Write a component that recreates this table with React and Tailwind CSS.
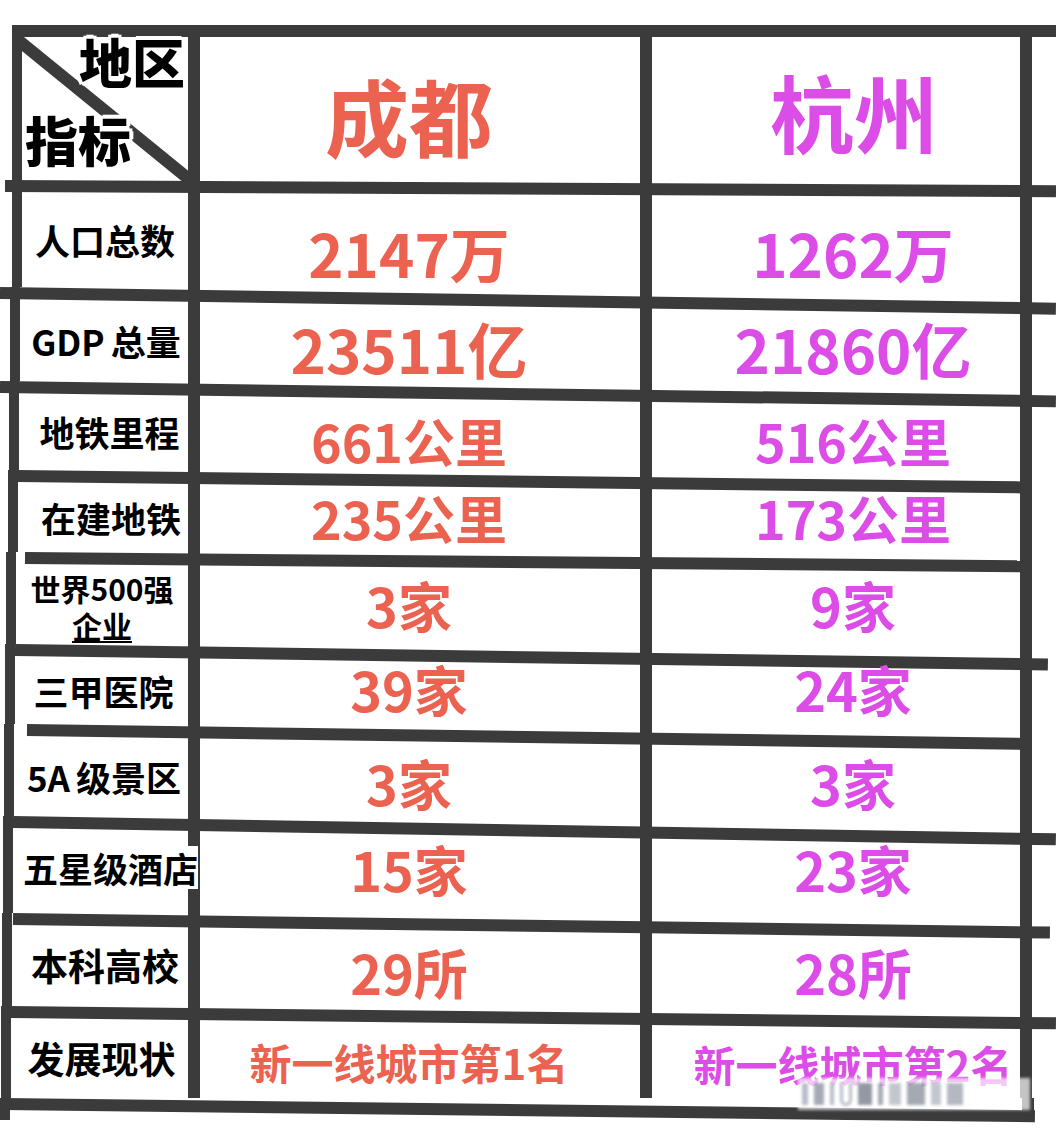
import React from "react";

const DARK = "bg-[#3b3b3b]";
const SHADOW =
  "[text-shadow:0_0_3px_#fff,4px_0_0_#fff,-4px_0_0_#fff,0_4px_0_#fff,0_-4px_0_#fff,3px_3px_0_#fff,-3px_-3px_0_#fff,3px_-3px_0_#fff,-3px_3px_0_#fff]";

function Bar({ cls }) {
  return <div className={`h-[12px] ${DARK} origin-left ${cls}`} />;
}

function Row({ h, ml, w1, label, a, b, size, tya, tyb }) {
  return (
    <div className={`flex -mt-[12px] ${h}`}>
      <div className={`${ml} w-[10px] shrink-0 ${DARK}`} />
      <div className={`${w1} shrink-0 pt-[12px] flex items-center justify-center`}>
        {label}
      </div>
      <div className={`w-[12px] shrink-0 ${DARK}`} />
      <div className="w-[440px] shrink-0 pt-[12px] pr-[22px] flex items-center justify-center">
        <span className={`${size} ${tya} font-bold leading-none whitespace-nowrap text-[#ec6250]`}>{a}</span>
      </div>
      <div className={`w-[12px] shrink-0 ${DARK}`} />
      <div className="w-[368px] shrink-0 pt-[12px] pl-[34px] flex items-center justify-center">
        <span className={`${size} ${tyb} font-bold leading-none whitespace-nowrap text-[#dc4ce6]`}>{b}</span>
      </div>
      <div className={`w-[12px] shrink-0 ${DARK}`} />
    </div>
  );
}

const L = "text-[35px] font-bold leading-none text-black whitespace-nowrap";
const L37 = "text-[37px] font-bold leading-none text-black whitespace-nowrap";

export default function App() {
  return (
    <div className="relative w-[1056px] h-[1134px] bg-white overflow-hidden font-['Noto_Sans_CJK_SC','Noto_Sans',sans-serif]">
      <div className="pt-[25px]">
        <Bar cls="ml-[12px] w-[1044px]" />
        {/* header row */}
        <div className="flex -mt-[12px] h-[155px]">
          <div className={`ml-[12px] w-[10px] shrink-0 ${DARK}`} />
          <div className="w-[166px] shrink-0 pt-[12px] relative">
            <svg className="absolute left-0 top-0 overflow-visible" width="166" height="155">
              <line x1="-4" y1="15" x2="168" y2="155" stroke="#3b3b3b" strokeWidth="12" />
            </svg>
            <div className="relative z-10 flex flex-col">
              <span className={`self-end mr-[3px] -mt-[2px] text-[53px] font-black leading-none text-black ${SHADOW}`}>地区</span>
              <span className={`self-start ml-[3px] mt-[25px] text-[53px] font-black leading-none text-black ${SHADOW}`}>指标</span>
            </div>
          </div>
          <div className={`w-[12px] shrink-0 ${DARK}`} />
          <div className="w-[440px] shrink-0 pt-[12px] pr-[22px] flex items-center justify-center">
            <span className="text-[84px] font-bold leading-none text-[#ec6250] translate-y-[6px]">成都</span>
          </div>
          <div className={`w-[12px] shrink-0 ${DARK}`} />
          <div className="w-[368px] shrink-0 pt-[12px] pl-[36px] flex items-center justify-center">
            <span className="text-[84px] font-bold leading-none text-[#dc4ce6] translate-y-[2px]">杭州</span>
          </div>
          <div className={`w-[12px] shrink-0 ${DARK}`} />
        </div>

        <Bar cls="ml-[5px] w-[1051px] rotate-[0.28deg]" />
        <Row h="h-[107px]" ml="ml-[12px]" w1="w-[166px]" size="text-[60px]" tya="translate-y-[12px]" tyb="translate-y-[12px]"
          label={<span className={L}>人口总数</span>} a="2147万" b="1262万" />

        <Bar cls="ml-[0px] w-[1056px] rotate-[0.85deg]" />
        <Row h="h-[94px]" ml="ml-[10px]" w1="w-[168px]" size="text-[60px]" tya="translate-y-[8px]" tyb="translate-y-[8px]"
          label={<span className={`${L} translate-x-[2px]`}><span>GDP</span><span className="ml-[6px]">总量</span></span>} a="23511亿" b="21860亿" />

        <Bar cls="ml-[0px] w-[1056px] rotate-[0.78deg]" />
        <Row h="h-[89px]" ml="ml-[9px]" w1="w-[169px]" size="text-[52px]" tya="translate-y-[9px]" tyb="translate-y-[9px]"
          label={<span className={`${L} translate-x-[6px]`}>地铁里程</span>} a="661公里" b="516公里" />

        <Bar cls="ml-[17px] w-[1005px] rotate-[0.65deg]" />
        <Row h="h-[82px]" ml="ml-[8px]" w1="w-[170px]" size="text-[52px]" tya="translate-y-[1px]" tyb="translate-y-[1px]"
          label={<span className={`${L} translate-x-[8px]`}>在建地铁</span>} a="235公里" b="173公里" />

        <Bar cls="ml-[25px] w-[1005px] rotate-[0.47deg]" />
        <Row h="h-[92px]" ml="ml-[6px]" w1="w-[172px]" size="text-[54px]" tya="translate-y-[1px]" tyb="translate-y-[1px]"
          label={
            <div className="flex flex-col items-center text-[30px] leading-[37px] font-bold text-black translate-y-[3px]">
              <span>世界500强</span>
              <span className="underline decoration-[2px] underline-offset-[3px]">企业</span>
            </div>
          }
          a="3家" b="9家" />

        <Bar cls="ml-[15px] w-[1033px] rotate-[0.8deg]" />
        <Row h="h-[80px]" ml="ml-[5px]" w1="w-[173px]" size="text-[54px]" tya="-translate-y-[1px]" tyb="-translate-y-[1px]"
          label={<span className={`${L} translate-x-[2px]`}>三甲医院</span>} a="39家" b="24家" />

        <Bar cls="ml-[27px] w-[1003px] rotate-[0.8deg]" />
        <Row h="h-[92px]" ml="ml-[4px]" w1="w-[174px]" size="text-[54px]" tya="translate-y-[7px]" tyb="translate-y-[7px]"
          label={<span className={`${L} translate-x-[3px]`}><span>5A</span><span className="ml-[6px]">级景区</span></span>} a="3家" b="3家" />

        <Bar cls="ml-[13px] w-[1043px] rotate-[0.95deg]" />
        <Row h="h-[97px]" ml="ml-[3px]" w1="w-[175px]" size="text-[54px]" tya="-translate-y-[2px]" tyb="-translate-y-[2px]"
          label={<span className={`${L} relative z-10 bg-white py-[4px] translate-x-[10px] -translate-y-[3px]`}>五星级酒店</span>}
          a="15家" b="23家" />

        <Bar cls="ml-[13px] w-[1037px] rotate-[0.75deg]" />
        <Row h="h-[93px]" ml="ml-[2px]" w1="w-[176px]" size="text-[54px]" tya="translate-y-[6px]" tyb="translate-y-[6px]"
          label={<span className={`${L37} translate-x-[5px]`}>本科高校</span>} a="29所" b="28所" />

        <Bar cls="ml-[10px] w-[1046px] rotate-[0.62deg]" />
        <Row h="h-[92px]" ml="ml-[1px]" w1="w-[177px]" size="text-[42px]" tya="translate-y-[4px]" tyb="translate-y-[6px]"
          label={<span className={`${L37} translate-x-[2px]`}>发展现状</span>} a="新一线城市第1名" b="新一线城市第2名" />

        <Bar cls="ml-[3px] w-[1032px] rotate-[0.68deg]" />
        <div className="flex -mt-[12px] h-[22px]">
          <div className={`ml-[0px] w-[10px] shrink-0 ${DARK}`} />
          <div className="w-[1012px] shrink-0" />
          <div className={`w-[12px] h-[18px] shrink-0 ${DARK}`} />
        </div>
      </div>

      {/* watermark overlay */}
      <div className="absolute left-[798px] top-[1078px] w-[232px] h-[32px] bg-white/70 blur-[1.5px] flex items-center gap-[6px] px-[4px]">
        <div className="w-[6px] h-[22px] bg-gray-400/70" />
        <div className="w-[10px] h-[22px] bg-gray-500/60" />
        <div className="w-[4px] h-[22px] bg-gray-400/70" />
        <div className="w-[12px] h-[24px] rounded-b-full border-[3px] border-t-0 border-gray-400/70" />
        <div className="w-[14px] h-[22px] bg-gray-600/60" />
        <div className="w-[5px] h-[22px] bg-gray-500/60" />
        <div className="w-[12px] h-[22px] bg-gray-400/60" />
        <div className="w-[18px] h-[22px] bg-gray-600/50" />
        <div className="w-[10px] h-[22px] bg-gray-400/60" />
        <div className="w-[16px] h-[22px] bg-gray-500/50" />
      </div>
    </div>
  );
}
